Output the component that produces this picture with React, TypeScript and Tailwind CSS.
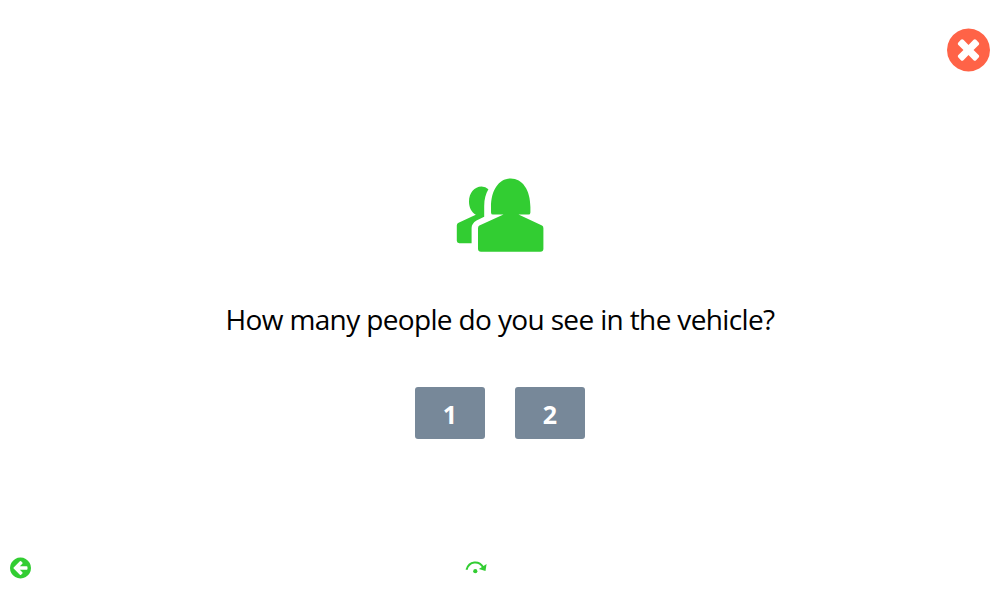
import React from "react";

function PeopleIcon() {
  return (
    <svg width="110" height="95" viewBox="0 0 110 95" fill="#32cd32" aria-hidden="true">
      <path d="M48 46.6Q46 46.6 46 44.4V39C46 22 54 10.5 65.7 10.5S85.4 22 85.4 39V44.4Q85.4 46.6 83.4 46.6H73.5L97 57.4Q98.4 58.2 98.4 60.2V80.8Q98.4 83.8 95.4 83.8H36Q33 83.8 33 80.8V60.2Q33 58.2 34.4 57.4L58.5 46.6Z" />
      <path d="M43.4 21.3C40.8 26 39.2 31 39.2 38V48.8L31.5 52.5Q26.6 55.5 26.6 60V75.2H14.3Q11.8 75.2 11.8 72.8V57.5Q11.8 55.5 13.6 54.8L30.8 46.8C26.5 44.4 24 39.5 24 33.8C24 25 29.5 18.6 36.6 18.6Q40.6 18.6 43.4 21.3Z" />
    </svg>
  );
}

function CloseIcon() {
  return (
    <svg className="h-[44px] w-[43px]" viewBox="128 110 1536 1572" fill="#ff6347" aria-hidden="true">
      <path d="M1277 1122q0-26-19-45l-181-181 181-181q19-19 19-45 0-27-19-46l-90-90q-19-19-46-19-26 0-45 19l-181 181-181-181q-19-19-45-19-27 0-46 19l-90 90q-19 19-19 46 0 26 19 45l181 181-181 181q-19 19-19 45 0 27 19 46l90 90q19 19 46 19 26 0 45-19l181-181 181 181q19 19 45 19 27 0 46-19l90-90q19-19 19-46zm387-226q0 209-103 385.5t-279.5 279.5-385.5 103-385.5-103-279.5-279.5-103-385.5 103-385.5 279.5-279.5 385.5-103 385.5 103 279.5 279.5 103 385.5z" />
    </svg>
  );
}

function BackIcon() {
  return (
    <svg className="h-[22px] w-[21px]" viewBox="128 91 1536 1609" fill="#32cd32" aria-hidden="true">
      <path d="M1408 960v-128q0-26-19-45t-45-19h-502l189-189q19-19 19-45t-19-45l-91-91q-18-18-45-18t-45 18l-362 362-91 91q-18 18-18 45t18 45l91 91 362 362q18 18 45 18t45-18l91-91q18-18 18-45t-18-45l-189-189h502q26 0 45-19t19-45zm256-64q0 209-103 385.5t-279.5 279.5-385.5 103-385.5-103-279.5-279.5-103-385.5 103-385.5 279.5-279.5 385.5-103 385.5 103 279.5 279.5 103 385.5z" />
    </svg>
  );
}

function SkipIcon() {
  return (
    <svg width="23" height="16" viewBox="0.4 0 23 16" fill="none" aria-hidden="true">
      <path d="M1.9 10.7C4.6 1.9 14.3 1.3 18.6 8.3" stroke="#32cd32" strokeWidth="2" />
      <path d="M22 4.9L20.9 12.1L14.3 9.9Z" fill="#32cd32" />
      <circle cx="10.7" cy="12.2" r="2.1" fill="#32cd32" />
    </svg>
  );
}

function Choice({ value }: { value: number }) {
  return (
    <button className="flex h-[52px] w-[70px] items-center justify-center rounded-[3px] bg-[#778899] pt-[3px] pl-px text-[25px] leading-none font-bold text-white">
      {value}
    </button>
  );
}

export default function App() {
  return (
    <main className="flex h-[605px] w-full flex-col bg-white font-['Open_Sans','Noto_Sans',sans-serif] text-black">
      <header className="flex h-[168px] items-start justify-end pt-[28px] pr-[10px]">
        <button aria-label="Close">
          <CloseIcon />
        </button>
      </header>
      <section className="flex h-[380px] flex-col items-center">
        <PeopleIcon />
        <h1 className="mt-[35px] h-[42px] text-[28px] leading-[42px] tracking-[-0.64px] whitespace-nowrap">
          How many people do you see in the vehicle?
        </h1>
        <div className="mt-[47px] flex gap-[30px] pr-px">
          <Choice value={1} />
          <Choice value={2} />
        </div>
      </section>
      <footer className="flex items-start pt-[9px] pl-[10px]">
        <button aria-label="Back">
          <BackIcon />
        </button>
        <button aria-label="Skip" className="ml-[434px] pt-[2px]">
          <SkipIcon />
        </button>
      </footer>
    </main>
  );
}
